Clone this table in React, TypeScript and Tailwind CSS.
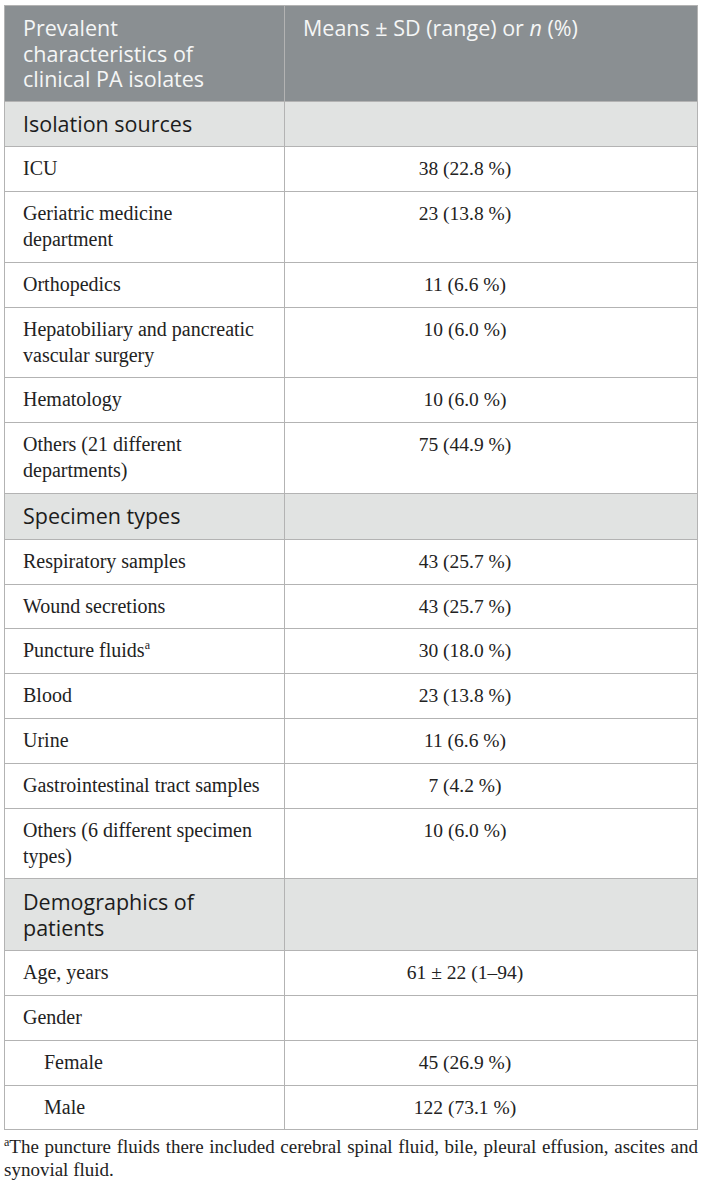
type Row = {
  lines: string[]
  value?: string
  sup?: string
  indent?: boolean
  section?: boolean
}

const rows: Row[] = [
  { lines: ['Isolation sources'], section: true },
  { lines: ['ICU'], value: '38 (22.8 %)' },
  { lines: ['Geriatric medicine', 'department'], value: '23 (13.8 %)' },
  { lines: ['Orthopedics'], value: '11 (6.6 %)' },
  { lines: ['Hepatobiliary and pancreatic', 'vascular surgery'], value: '10 (6.0 %)' },
  { lines: ['Hematology'], value: '10 (6.0 %)' },
  { lines: ['Others (21 different', 'departments)'], value: '75 (44.9 %)' },
  { lines: ['Specimen types'], section: true },
  { lines: ['Respiratory samples'], value: '43 (25.7 %)' },
  { lines: ['Wound secretions'], value: '43 (25.7 %)' },
  { lines: ['Puncture fluids'], sup: 'a', value: '30 (18.0 %)' },
  { lines: ['Blood'], value: '23 (13.8 %)' },
  { lines: ['Urine'], value: '11 (6.6 %)' },
  { lines: ['Gastrointestinal tract samples'], value: '7 (4.2 %)' },
  { lines: ['Others (6 different specimen', 'types)'], value: '10 (6.0 %)' },
  { lines: ['Demographics of', 'patients'], section: true },
  { lines: ['Age, years'], value: '61 ± 22 (1–94)' },
  { lines: ['Gender'] },
  { lines: ['Female'], value: '45 (26.9 %)', indent: true },
  { lines: ['Male'], value: '122 (73.1 %)', indent: true },
]

const sans = "font-['Open_Sans',Lato,sans-serif]"
const serif = "font-['Liberation_Serif','Times_New_Roman',serif]"

function Lines({ lines }: { lines: string[] }) {
  return (
    <>
      {lines.map((l, i) => (
        <span key={i} className="block whitespace-nowrap">
          {l}
        </span>
      ))}
    </>
  )
}

export default function App() {
  return (
    <div className="bg-white w-[702px] min-h-[1189px] px-[4px] pt-[5px]">
      <table className="w-[694px] border-collapse table-fixed border border-[#b3b3b3]">
        <colgroup>
          <col className="w-[280px]" />
          <col />
        </colgroup>
        <thead>
          <tr className="bg-[#8a8f92] text-[#f5f6f6]">
            <th
              className={`${sans} font-normal text-left align-top text-[21.5px] leading-[25.5px] pl-[18px] pr-[10px] py-[9px] border border-[#b3b3b3]`}
            >
              <Lines lines={['Prevalent', 'characteristics of', 'clinical PA isolates']} />
            </th>
            <th
              className={`${sans} font-normal text-left align-top text-[21.5px] leading-[25.5px] pl-[18px] pr-[10px] py-[9px] border border-[#b3b3b3]`}
            >
              Means ± SD (range) or <i>n</i> (%)
            </th>
          </tr>
        </thead>
        <tbody>
          {rows.map((row, i) =>
            row.section ? (
              <tr key={i} className="bg-[#e1e3e2] text-[#1c1c1c]">
                <td
                  className={`${sans} text-[21.5px] leading-[25.8px] pl-[18px] pr-[10px] py-[9.5px] align-top border border-[#b3b3b3]`}
                >
                  <Lines lines={row.lines} />
                </td>
                <td className="border border-[#b3b3b3]" />
              </tr>
            ) : (
              <tr key={i} className="text-[#222222]">
                <td
                  className={`${serif} text-[20px] leading-[25.85px] pr-[10px] py-[9px] align-top border border-[#b3b3b3] ${
                    row.indent ? 'pl-[39px]' : 'pl-[18px]'
                  }`}
                >
                  {row.lines.map((l, j) => (
                    <span key={j} className="block whitespace-nowrap">
                      {l}
                      {row.sup && j === row.lines.length - 1 && (
                        <sup className="text-[12px] -top-[8px]">{row.sup}</sup>
                      )}
                    </span>
                  ))}
                </td>
                <td
                  className={`${serif} text-[19.5px] leading-[25.85px] text-center align-top pl-[18px] pr-[70px] py-[9px] border border-[#b3b3b3]`}
                >
                  {row.value}
                </td>
              </tr>
            )
          )}
        </tbody>
      </table>
      <div className={`${serif} text-[19px] leading-[23px] text-[#222222] mt-[5px] w-[694px]`}>
        <p className="text-justify [text-align-last:justify] whitespace-nowrap">
          <sup className="text-[12px] -top-[7px]">a</sup>The puncture fluids there included
          cerebral spinal fluid, bile, pleural effusion, ascites and
        </p>
        <p>synovial fluid.</p>
      </div>
    </div>
  )
}
